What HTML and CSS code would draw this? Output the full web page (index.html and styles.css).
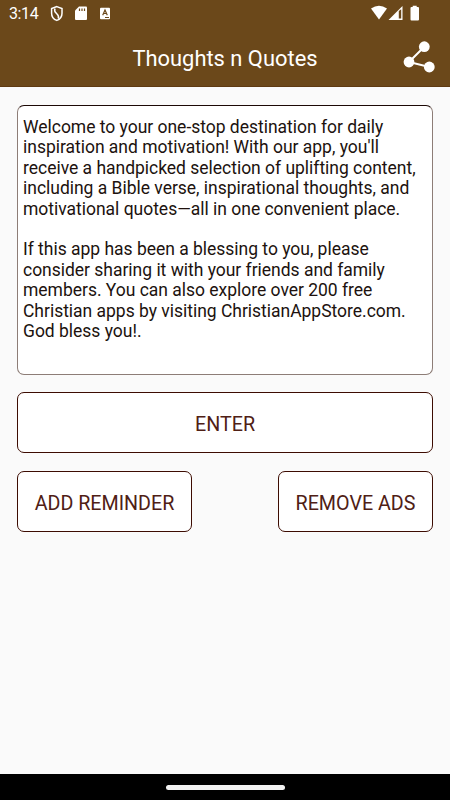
FILE: index.html
```html
<!DOCTYPE html>
<html lang="en">
<head>
<meta charset="utf-8">
<title>Thoughts n Quotes</title>
<link rel="stylesheet" href="styles.css">
</head>
<body>
<header class="top">
  <div class="status">
    <span class="time">3:14</span>
    <svg class="status-left" width="66" height="18" viewBox="0 0 66 18">
      <path d="M8.8 1.6 L14 3.6 V8.2 C14 12 12 14.3 8.8 15.4 C5.6 14.3 3.6 12 3.6 8.2 V3.6 Z" fill="none" stroke="#fff" stroke-width="1.5"/>
      <path d="M7 3.5 C4.5 8.5 12.5 8.5 10.3 13.6" fill="none" stroke="#fff" stroke-width="1.5"/>
      <path d="M31 1.5 H38 Q39 1.5 39 2.5 V14 Q39 15 38 15 H28 Q27 15 27 14 V5.5 Z" fill="#fff"/>
      <path d="M31.5 3.5 V6 M34 3.5 V6 M36.5 3.5 V6" stroke="#6b481a" stroke-width="1.2"/>
      <rect x="52" y="2.7" width="10" height="11.5" rx="1" fill="#fff"/>
      <path d="M54.7 10.2 L57 5 L59.3 10.2 M55.5 8.5 H58.5 M57 12.5 H61" fill="none" stroke="#6b481a" stroke-width="1.2"/>
    </svg>
    <svg class="status-right" width="52" height="18" viewBox="0 0 52 18">
      <path d="M1 3.5 Q9 -2 17 3.5 L9 14.5 Z" fill="#fff"/>
      <path d="M18.5 15 L32.5 1 V15 Z" fill="#fff"/>
      <path d="M28.8 6 L31.2 4.2 V13.5 H28.8 Z" fill="#6b481a"/>
      <path d="M41.5 2 H42.7 V0.7 H46.7 V2 H48 Q49 2 49 3 V14.5 Q49 15.5 48 15.5 H41.5 Q40.5 15.5 40.5 14.5 V3 Q40.5 2 41.5 2 Z" fill="#fff"/>
    </svg>
  </div>
  <div class="bar">
    <h1>Thoughts n Quotes</h1>
    <svg class="share" width="32" height="32" viewBox="0 0 32 32">
      <path d="M21.3 5.7 L6 21 L26.3 26" fill="none" stroke="#fff" stroke-width="2"/>
      <circle cx="21.3" cy="5.7" r="5.4" fill="#fff"/>
      <circle cx="6" cy="21" r="5.4" fill="#fff"/>
      <circle cx="26.3" cy="26" r="5.4" fill="#fff"/>
    </svg>
  </div>
</header>
<main>
  <section class="box intro">
    <p>Welcome to your one-stop destination for daily<br>inspiration and motivation! With our app, you'll<br>receive a handpicked selection of uplifting content,<br>including a Bible verse, inspirational thoughts, and<br>motivational quotes—all in one convenient place.</p>
    <p>If this app has been a blessing to you, please<br>consider sharing it with your friends and family<br>members. You can also explore over 200 free<br>Christian apps by visiting ChristianAppStore.com.<br>God bless you!.</p>
  </section>
  <button class="box enter">ENTER</button>
  <div class="row">
    <button class="box reminder">ADD REMINDER</button>
    <button class="box ads">REMOVE ADS</button>
  </div>
</main>
<footer class="nav"><span class="handle"></span></footer>
</body>
</html>
```

FILE: styles.css
```css
* { box-sizing: border-box; }
body {
  margin: 0;
  width: 450px;
  height: 800px;
  display: flex;
  flex-direction: column;
  overflow: hidden;
  background: #fafafa;
  font-family: Roboto, "Liberation Sans", sans-serif;
}
.top {
  height: 87px;
  background: #6b481a;
  border-bottom: 1px solid #5f3a12;
  color: #fff;
}
.status {
  height: 27px;
  display: flex;
  align-items: flex-start;
  padding: 5px 28px 0 9px;
}
.time {
  width: 39px;
  font-size: 16px;
  line-height: 18px;
  letter-spacing: -0.4px;
}
.status-right { margin-left: auto; }
.bar {
  height: 60px;
  display: grid;
  grid-template-columns: 1fr auto 1fr;
  align-items: center;
}
h1 {
  grid-column: 2;
  margin: 3px 0 0;
  font-size: 21.9px;
  line-height: 28px;
  font-weight: 400;
  white-space: nowrap;
}
.share {
  justify-self: end;
  margin: 0 15px 1px 0;
}
main {
  flex: 1;
  display: flex;
  flex-direction: column;
  gap: 18px;
  padding: 18px 17px 0;
}
.box {
  background: #fff;
  border: 1px solid #3d0c02;
  border-radius: 7px;
}
.intro {
  height: 269.5px;
  padding: 11px 5px;
  border-color: #1c0805 #8d7d77 #8d7d77;
  color: #20120e;
  font-size: 17.5px;
  letter-spacing: -0.02px;
  line-height: 20.4px;
  white-space: nowrap;
}
.intro p { margin: 0 0 20.4px; }
button {
  height: 61px;
  padding: 4px 0 0;
  font: 400 19.7px/24px Roboto, "Liberation Sans", sans-serif;
  color: #4f2015;
}
.enter { margin-top: -0.5px; }
.row {
  display: flex;
  justify-content: space-between;
}
.reminder { width: 175px; }
.ads { width: 155px; }
.nav {
  height: 26px;
  background: #000;
  display: flex;
  justify-content: center;
  align-items: center;
}
.handle {
  width: 119px;
  height: 5px;
  border-radius: 3px;
  background: #f2f2f2;
}
```
